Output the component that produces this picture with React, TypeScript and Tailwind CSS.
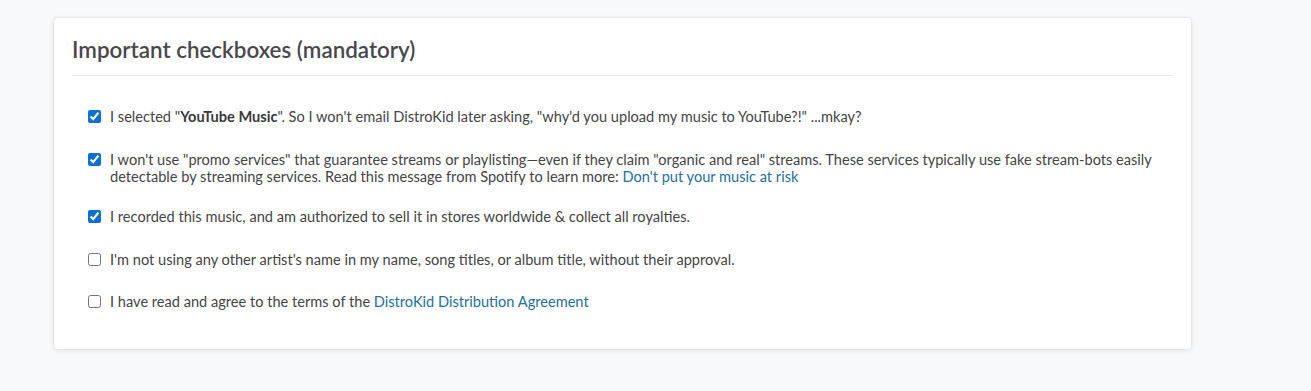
import React from "react";

const items: { checked: boolean; content: React.ReactNode; cls?: string }[] = [
  {
    checked: true,
    content: (
      <>
        I selected "<b className="font-bold text-[#3a3a3a]">YouTube Music</b>". So I won't email DistroKid later asking, "why'd you upload my music to YouTube?!" ...mkay?
      </>
    ),
  },
  {
    checked: true,
    content: (
      <>
        I won't use "promo services" that guarantee streams or playlisting—even if they claim "organic and real" streams. These services typically use fake stream-bots easily detectable by streaming services. Read this message from Spotify to learn more:{" "}
        <a className="text-[#23719e]">Don't put your music at risk</a>
      </>
    ),
  },
  {
    checked: true,
    cls: "-mt-[3px]",
    content: <>I recorded this music, and am authorized to sell it in stores worldwide &amp; collect all royalties.</>,
  },
  {
    checked: false,
    content: <>I'm not using any other artist's name in my name, song titles, or album title, without their approval.</>,
  },
  {
    checked: false,
    cls: "-mt-[1px]",
    content: (
      <>
        I have read and agree to the terms of the <a className="text-[#23719e]">DistroKid Distribution Agreement</a>
      </>
    ),
  },
];

export default function App() {
  return (
    <div className="min-h-[391px] bg-[#f8f9fb] pt-[17px] pl-[53px] pr-[119px] font-['Lato',sans-serif]">
      <div className="rounded-[4px] border border-[#e6e7ea] bg-white shadow-[0_1px_4px_rgba(0,0,0,0.08)] px-[18px] pb-[39px] pt-[17px] w-[1139px]">
        <h2 className="text-[22.4px] leading-[30px] font-semibold text-[#48484d] pb-[10px] border-b border-[#e6e7e9]">
          Important checkboxes (mandatory)
        </h2>
        <div className="flex flex-col gap-[26px] pt-[32px] pl-[16px] pr-[20px]">
          {items.map((it, i) => (
            <label key={i} className={`flex items-start gap-[9px] text-[14.6px] leading-[17px] text-[#454545] ${it.cls ?? ""}`}>
              <input
                type="checkbox"
                defaultChecked={it.checked}
                className="mt-[2px] h-[13px] w-[13px] shrink-0 accent-[#0b6fd6]"
              />
              <span>{it.content}</span>
            </label>
          ))}
        </div>
      </div>
    </div>
  );
}
